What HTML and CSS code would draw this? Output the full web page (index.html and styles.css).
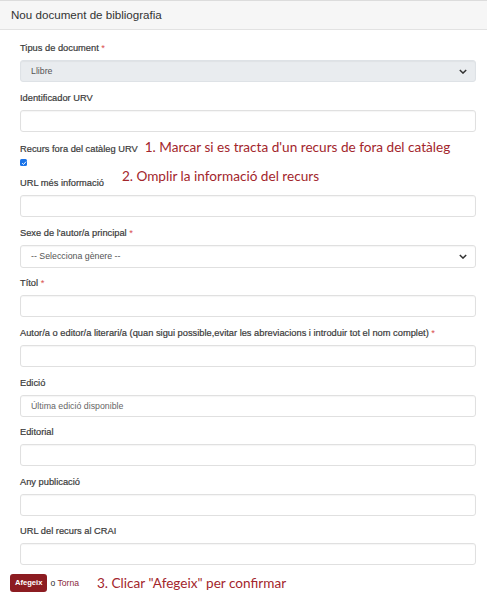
FILE: index.html
```html
<!DOCTYPE html>
<html lang="ca">
<head>
<meta charset="utf-8">
<title>Nou document de bibliografia</title>
<link rel="stylesheet" href="styles.css">
</head>
<body>
<div class="panel">
  <div class="panel-heading">Nou document de bibliografia</div>
  <form class="panel-body">
    <div class="group">
      <label class="lbl">Tipus de document <span class="req">*</span></label>
      <div class="control select disabled"><span>Llibre</span><svg class="chev" viewBox="0 0 10 6" width="8" height="5"><path d="M1 1l4 4 4-4" fill="none" stroke="#333" stroke-width="1.8"/></svg></div>
    </div>
    <div class="group">
      <label class="lbl">Identificador URV</label>
      <div class="control"></div>
    </div>
    <div class="group check-group">
      <div class="row-note">
        <label class="lbl">Recurs fora del catàleg URV</label>
        <span class="note note1">1. Marcar si es tracta d'un recurs de fora del catàleg</span>
      </div>
      <span class="checkbox"><svg viewBox="0 0 8 8" width="6" height="6"><path d="M1.5 4.2l1.8 1.8 3.4-3.8" fill="none" stroke="#fff" stroke-width="1.3"/></svg></span>
      <div class="row-note url-row">
        <label class="lbl">URL més informació</label>
        <span class="note note2">2. Omplir la informació del recurs</span>
      </div>
      <div class="control"></div>
    </div>
    <div class="group">
      <label class="lbl">Sexe de l'autor/a principal <span class="req">*</span></label>
      <div class="control select tall"><span>-- Selecciona gènere --</span><svg class="chev" viewBox="0 0 10 6" width="8" height="5"><path d="M1 1l4 4 4-4" fill="none" stroke="#333" stroke-width="1.8"/></svg></div>
    </div>
    <div class="group">
      <label class="lbl">Títol <span class="req">*</span></label>
      <div class="control"></div>
    </div>
    <div class="group">
      <label class="lbl">Autor/a o editor/a literari/a (quan sigui possible,evitar les abreviacions i introduir tot el nom complet) <span class="req">*</span></label>
      <div class="control"></div>
    </div>
    <div class="group">
      <label class="lbl">Edició</label>
      <div class="control"><span class="ph">Última edició disponible</span></div>
    </div>
    <div class="group">
      <label class="lbl">Editorial</label>
      <div class="control"></div>
    </div>
    <div class="group">
      <label class="lbl">Any publicació</label>
      <div class="control"></div>
    </div>
    <div class="group">
      <label class="lbl">URL del recurs al CRAI</label>
      <div class="control"></div>
    </div>
    <div class="actions">
      <span class="btn">Afegeix</span>
      <span class="or">o <span class="link">Torna</span></span>
      <span class="note note3">3. Clicar "Afegeix" per confirmar</span>
    </div>
  </form>
</div>
</body>
</html>
```
FILE: styles.css
```css
* { box-sizing: border-box; }
html, body { margin: 0; padding: 0; background: #fff; }
body { font-family: "Liberation Sans", Arial, sans-serif; color: #333; }

.panel-heading {
  height: 30px;
  background: #f6f6f6;
  border-top: 1px solid #dcdcdc;
  border-bottom: 1px solid #e2e2e2;
  padding: 0 11px;
  font-size: 11.6px;
  line-height: 28px;
  color: #333;
}
.panel-body {
  display: flex;
  flex-direction: column;
  padding: 12px 11px 0 20px;
}
.group {
  display: flex;
  flex-direction: column;
  margin-bottom: 9.6px;
}
.lbl {
  display: block;
  font-size: 9.3px;
  line-height: 12px;
  height: 12px;
  font-weight: normal;
  -webkit-text-stroke: 0.2px #3a3a3a;
  color: #3a3a3a;
  margin-bottom: 6px;
  white-space: nowrap;
}
.req { color: #d9534f; -webkit-text-stroke: 0; }
.control {
  height: 22px;
  border: 1px solid #e0e0e0;
  border-radius: 3px;
  background: #fff;
  box-shadow: inset 0 1px 1px rgba(0,0,0,0.04);
  display: flex;
  align-items: center;
  padding: 0 10px;
  font-size: 8.8px;
  color: #555;
}
.control.tall { height: 23px; }
.select { justify-content: space-between; }
.select.disabled { background: #e9ecef; border-color: #dee2e6; }
.chev { margin-right: -2px; }
.ph { color: #666; }

.row-note {
  display: flex;
  align-items: baseline;
  height: 12px;
}
.row-note .lbl { margin-bottom: 0; }
.note {
  font-family: Lato, "Open Sans", sans-serif;
  color: #a3262c;
  font-size: 13.6px;
  line-height: 12px;
  white-space: nowrap;
}
.note1 { margin-left: 7px; }
.checkbox {
  width: 7px;
  height: 7px;
  margin: 6px 0 0 0;
  border-radius: 1.5px;
  background: #1a73e8;
  display: flex;
  align-items: center;
  justify-content: center;
}
.url-row { margin-top: 9px; margin-bottom: 8px; }
.note2 { margin-left: 18px; position: relative; top: -5px; }

.actions {
  display: flex;
  align-items: center;
  margin-left: -10px;
  margin-top: -1px;
  height: 18px;
}
.btn {
  background: #8c1c21;
  color: #fff;
  font-size: 7.6px;
  height: 18px;
  line-height: 18px;
  padding: 0 5px;
  border-radius: 3px;
  font-weight: 600;
}
.or { font-size: 8.6px; margin-left: 3px; color: #333; }
.link { color: #8b2a3c; }
.note3 { margin-left: 18px; }
```
